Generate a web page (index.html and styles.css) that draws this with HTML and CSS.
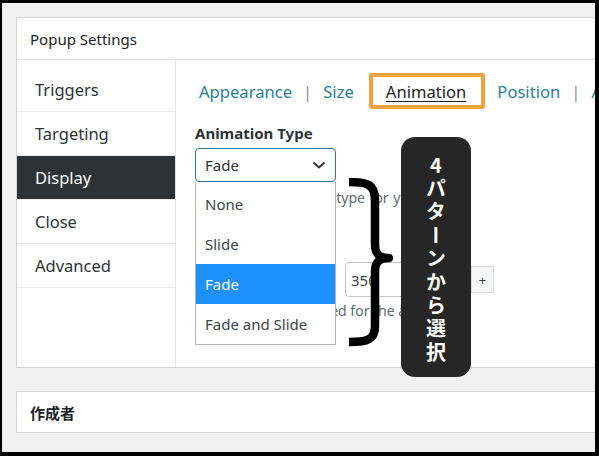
FILE: index.html
```html
<!DOCTYPE html>
<html lang="ja">
<head>
<meta charset="utf-8">
<title>Popup Settings</title>
<link rel="stylesheet" href="styles.css">
</head>
<body>
<div class="screen">
  <div class="postbox">
    <div class="postbox-header">Popup Settings</div>
    <div class="postbox-body">
      <ul class="side-tabs">
        <li>Triggers</li>
        <li>Targeting</li>
        <li class="active">Display</li>
        <li>Close</li>
        <li>Advanced</li>
      </ul>
      <div class="content">
        <nav class="subtabs">
          <a>Appearance</a><span class="sep">|</span><a>Size</a><span class="hl"><a class="current">Animation</a></span><a>Position</a><span class="sep">|</span><a>Advanced</a>
        </nav>
        <div class="field">
          <div class="field-label">Animation Type</div>
          <div class="select-wrap">
            <div class="select"><span>Fade</span>
              <svg class="chev" width="14" height="8" viewBox="0 0 14 8"><path d="M1.5 1.5 L7 6.5 L12.5 1.5" fill="none" stroke="#2c3338" stroke-width="2"/></svg>
            </div>
            <ul class="options">
              <li>None</li>
              <li>Slide</li>
              <li class="sel">Fade</li>
              <li>Fade and Slide</li>
            </ul>
          </div>
          <p class="desc first">Select the animation type for your popup</p>
        </div>
        <div class="field speed">
          <div class="range-row">
            <div class="slider"></div>
            <span class="minus">-</span>
            <span class="num">350</span>
            <span class="unit">ms</span>
            <span class="plus">+</span>
          </div>
          <p class="desc">The duration (ms) used for the animation.</p>
        </div>
        <svg class="brace" width="50" height="170" viewBox="0 0 50 170"><path d="M4 4 C 22 4, 30 6, 30 22 L 30 66 C 30 76, 34 80, 44 80 C 34 80, 30 84, 30 94 L 30 148 C 30 162, 22 164, 4 164" fill="none" stroke="#000" stroke-width="8.5" stroke-linejoin="round"/></svg>
        <div class="callout">4パターンから選択</div>
      </div>
    </div>
  </div>
  <div class="postbox author">
    <div class="postbox-header">作成者</div>
  </div>
</div>
</body>
</html>
```

FILE: styles.css
```css
* { box-sizing: border-box; }
html, body { margin: 0; padding: 0; }
body {
  background: #000;
  font-family: "Noto Sans", "Noto Sans CJK JP", sans-serif;
  color: #2c3338;
}
.screen {
  margin: 3px 4px 4px 2px;
  height: 449px;
  background: #f1f1f1;
  overflow: hidden;
}
.postbox {
  margin: 14px 0 0 14px;
  width: 620px;
  background: #fff;
  border: 1px solid #d4d4d4;
}
.postbox-header {
  height: 42px;
  border-bottom: 1px solid #dcdcde;
  padding-left: 13px;
  display: flex;
  align-items: center;
  font-size: 15px;
  color: #1d2327;
}
.postbox-body {
  display: flex;
  height: 307px;
}
.side-tabs {
  list-style: none;
  margin: 0;
  padding: 8px 0 0;
  width: 159px;
  flex-shrink: 0;
  border-right: 1px solid #e2e2e2;
}
.side-tabs li {
  height: 44px;
  border-bottom: 1px solid #ececec;
  padding-left: 18px;
  display: flex;
  align-items: center;
  font-size: 16.5px;
  color: #2c3338;
}
.side-tabs li.active {
  background: #2c3338;
  color: #fff;
}
.content {
  position: relative;
  flex: 1;
  min-width: 0;
  padding: 13px 0 0 19px;
}
.subtabs {
  display: flex;
  align-items: center;
  height: 36px;
  padding-left: 4px;
  font-size: 16.6px;
  white-space: nowrap;
}
.subtabs a { color: #2a7f98; }
.subtabs .sep { color: #8c8f94; margin: 0 11px; }
.subtabs .hl {
  display: flex;
  align-items: center;
  height: 36px;
  margin: 0 12px 0 15px;
  padding: 0 15px 0 13px;
  border: 4px solid #f2a33f;
  border-radius: 3px;
  background: #fff;
}
.subtabs a.current { color: #1d2327; text-decoration: underline; text-underline-offset: 3px; }
.field-label {
  margin-top: 14px;
  height: 20px;
  line-height: 20px;
  font-size: 15px;
  font-weight: 700;
  color: #2c3338;
}
.select-wrap { position: relative; width: 141px; margin-top: 5px; }
.select {
  height: 34px;
  border: 1px solid #2e7196;
  border-radius: 4px;
  padding: 0 9px 0 9px;
  display: flex;
  align-items: center;
  justify-content: space-between;
  font-size: 15px;
  color: #2c3338;
  background: #fff;
}
.options {
  position: absolute;
  top: 100%;
  left: 0;
  width: 141px;
  margin: 0;
  padding: 2px 0 0;
  list-style: none;
  background: #fff;
  border: 1px solid #b4b4b4;
  border-top: none;
  z-index: 2;
}
.options li {
  height: 40px;
  padding-left: 9px;
  display: flex;
  align-items: center;
  font-size: 15px;
  color: #3c434a;
}
.options li.sel { background: #1e90ff; color: #fff; }
.desc {
  margin: 6px 0 0;
  height: 20px;
  line-height: 20px;
  font-size: 14px;
  color: #646970;
  white-space: nowrap;
}
.desc.first { word-spacing: 1px; }
.speed { padding-top: 54px; }
.range-row {
  display: flex;
  align-items: center;
  height: 35px;
}
.slider { width: 136px; height: 4px; background: #ddd; }
.minus { width: 14px; text-align: left; color: #b0b0b0; font-size: 14px; }
.num {
  width: 80px;
  height: 35px;
  border: 1px solid #c3c4c7;
  border-radius: 4px;
  padding-left: 5px;
  display: flex;
  align-items: center;
  font-size: 15px;
  color: #3c434a;
}
.unit { width: 46px; padding-left: 6px; font-size: 14px; color: #646970; }
.plus {
  width: 23px;
  height: 27px;
  border: 1px solid #dcdcde;
  background: #f6f7f7;
  display: flex;
  align-items: center;
  justify-content: center;
  font-size: 13px;
  color: #3c434a;
}
.range-row + .desc { margin-top: 4px; }
.brace {
  position: absolute;
  left: 169px;
  top: 118px;
  z-index: 3;
}
.callout {
  position: absolute;
  left: 225px;
  top: 77px;
  width: 70px;
  height: 240px;
  background: #262626;
  border-radius: 14px;
  color: #fff;
  z-index: 4;
  display: flex;
  justify-content: center;
  align-items: center;
  padding-top: 6px;
  writing-mode: vertical-rl;
  text-orientation: upright;
  font-family: "Noto Sans CJK JP", sans-serif;
  font-weight: 700;
  font-size: 20px;
  letter-spacing: 3.4px;
}
.author { margin-top: 23px; }
.author .postbox-header {
  height: 40px;
  border-bottom: none;
  font-weight: 700;
  font-family: "Noto Sans CJK JP", sans-serif;
  font-size: 15px;
}
```
